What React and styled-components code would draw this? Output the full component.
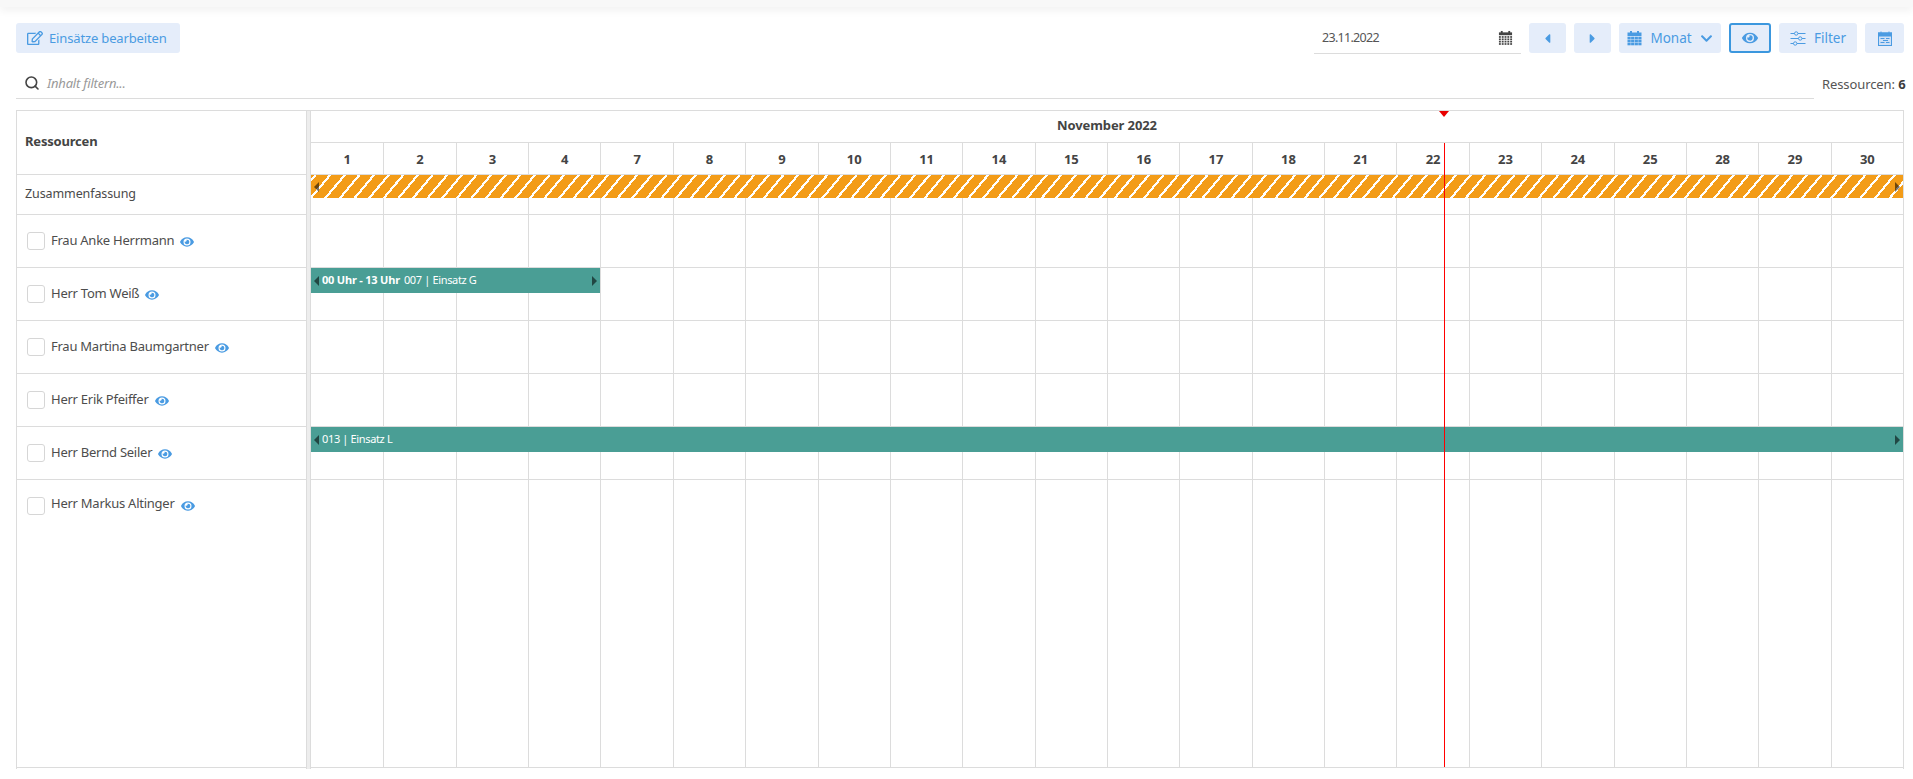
import React from "react";
import styled, { createGlobalStyle } from "styled-components";
import { FaRegEdit, FaEye, FaCaretLeft, FaCaretRight, FaChevronDown } from "react-icons/fa";
import { FiSearch } from "react-icons/fi";

const Global = createGlobalStyle`
  html, body { margin: 0; padding: 0; background: #fff; overflow: hidden; }
  * { box-sizing: border-box; }
  body { font-family: "Noto Sans", "Open Sans", sans-serif; font-size: 13px; color: #4a4a4a; }
`;

const Page = styled.div`
  height: 100vh;
  display: flex;
  flex-direction: column;
`;
const TopBar = styled.div`
  height: 7px;
  background: #f8f8f8;
  box-shadow: 0 3px 8px rgba(0, 0, 0, 0.07);
`;
const Toolbar = styled.div`
  display: flex;
  align-items: center;
  justify-content: space-between;
  margin-top: 16px;
  padding: 0 9px 0 16px;
  height: 30px;
`;
const Group = styled.div`
  display: flex;
  align-items: center;
  gap: 8px;
`;
const Button = styled.button`
  height: 30px;
  width: ${(p) => p.$w}px;
  display: flex;
  align-items: center;
  justify-content: center;
  gap: ${(p) => p.$gap ?? 8}px;
  border: ${(p) => (p.$active ? "2px solid #3b97de" : "none")};
  border-radius: 3px;
  background: #e5edfa;
  color: #4a9be2;
  font: 13.5px "Noto Sans", sans-serif;
  padding: 0;
`;
const EditButton = styled(Button)`
  font-size: 13px;
  letter-spacing: -0.15px;
  justify-content: flex-start;
  padding-left: 11px;
  gap: 6px;
`;
const DateField = styled.div`
  width: 207px;
  height: 31px;
  padding: 0 8px 0 8px;
  display: flex;
  align-items: center;
  justify-content: space-between;
  border-bottom: 1px solid #dcdcdc;
  color: #555;
  font-size: 12.5px;
  letter-spacing: -0.7px;
`;
const FilterRow = styled.div`
  display: flex;
  margin-top: 15px;
  padding: 0 9px 0 16px;
  gap: 8px;
  height: 31px;
  align-items: center;
`;
const SearchBox = styled.div`
  flex: 1;
  height: 31px;
  padding-left: 8px;
  display: flex;
  align-items: center;
  gap: 7px;
  border-bottom: 1px solid #dcdcdc;
  color: #444;
`;
const Placeholder = styled.span`
  font-style: italic;
  color: #999;
  font-size: 13px;
  letter-spacing: -0.2px;
`;
const Count = styled.div`
  width: 82px;
  padding-right: 1px;
  text-align: right;
  font-size: 13px;
  letter-spacing: -0.1px;
  white-space: nowrap;
  color: #555;
  b { color: #3c3c3c; }
`;
const Chart = styled.div`
  display: flex;
  margin: 11px 9px 0 16px;
  height: 659px;
`;
const Left = styled.div`
  width: 291px;
  border-left: 1px solid #dcdcdc;
  border-right: 1px solid #dcdcdc;
  border-top: 1px solid #dcdcdc;
`;
const Splitter = styled.div`
  width: 4px;
  background: #ededed;
  border-right: 1px solid #dcdcdc;
  border-top: 1px solid #dcdcdc;
`;
const Right = styled.div`
  flex: 1;
  position: relative;
  height: 659px;
  border-top: 1px solid #dcdcdc;
  border-right: 1px solid #dcdcdc;
`;
const HeadCell = styled.div`
  height: 64px;
  border-bottom: 1px solid #dcdcdc;
  padding: 0 0 3px 8px;
  display: flex;
  align-items: center;
  font-weight: 700;
  font-size: 13px;
  letter-spacing: -0.2px;
  color: #444;
`;
const LabelRow = styled.div`
  height: ${(p) => p.$h}px;
  border-bottom: 1px solid #dcdcdc;
  display: flex;
  align-items: ${(p) => (p.$last ? "flex-start" : "center")};
  padding: ${(p) => (p.$last ? "17px 0 0 10px" : "0 0 0 10px")};
  gap: 6px;
`;
const SummaryLabel = styled.div`
  height: 40px;
  border-bottom: 1px solid #dcdcdc;
  display: flex;
  align-items: center;
  padding: 0 0 2px 8px;
  font-size: 12.5px;
  letter-spacing: -0.1px;
  color: #4a4a4a;
`;
const Check = styled.span`
  width: 18px;
  height: 18px;
  border: 1px solid #d6d6d6;
  border-radius: 3px;
  background: #fff;
  flex: none;
`;
const Name = styled.span`
  font-size: 13px;
  letter-spacing: -0.25px;
  color: #4d4d4d;
  margin-top: -3px;
`;
const EyeWrap = styled.span`
  color: #4a9be2;
  display: flex;
  margin: 2px 0 0 0;
`;
const Month = styled.div`
  height: 32px;
  border-bottom: 1px solid #dcdcdc;
  padding-bottom: 3px;
  display: flex;
  align-items: center;
  justify-content: center;
  font-weight: 700;
  font-size: 13px;
  letter-spacing: -0.1px;
  color: #444;
`;
const Cols = styled.div`
  display: grid;
  grid-template-columns: repeat(22, 1fr);
  height: ${(p) => p.$h}px;
  border-bottom: 1px solid #dcdcdc;
  position: relative;
`;
const DayCell = styled.div`
  display: flex;
  align-items: center;
  justify-content: center;
  font-weight: 700;
  font-size: 13px;
  color: #444;
  & + & { border-left: 1px solid #dcdcdc; }
`;
const GridCell = styled.div`
  & + & { border-left: 1px solid #dcdcdc; }
`;
const Bar = styled.div`
  position: absolute;
  top: ${(p) => p.$top}px;
  left: 0;
  width: ${(p) => p.$width};
  height: ${(p) => p.$h}px;
  color: #fff;
  font-size: 11px;
  display: flex;
  padding: 4px 0 0 11px;
  gap: 4px;
  letter-spacing: -0.2px;
  span { letter-spacing: -0.35px; }
  background: ${(p) =>
    p.$striped
      ? "repeating-linear-gradient(-50deg, #f39c18 0, #f39c18 9px, #fff 9px, #fff 11.2px)"
      : "#4a9e95"};
`;
const Arrow = styled.span`
  position: absolute;
  top: ${(p) => p.$top}px;
  ${(p) => (p.$side === "left" ? "left: 3px;" : "right: 3px;")}
  width: 0;
  height: 0;
  border-top: 5px solid transparent;
  border-bottom: 5px solid transparent;
  ${(p) =>
    p.$side === "left"
      ? "border-right: 5px solid rgba(0,0,0,.55);"
      : "border-left: 5px solid rgba(0,0,0,.55);"}
`;
const TodayLine = styled.div`
  position: absolute;
  top: 32px;
  bottom: 2px;
  left: 1133px;
  width: 1px;
  background: #f00;
`;
const TodayMark = styled.div`
  position: absolute;
  top: 0;
  left: 1128px;
  width: 0;
  height: 0;
  border-left: 5px solid transparent;
  border-right: 5px solid transparent;
  border-top: 6px solid #e80000;
`;

const DateCalendar = () => (
  <svg width="15" height="16" viewBox="0 0 16 16" fill="#444">
    <rect x="3" y="0.5" width="2" height="3" />
    <rect x="11" y="0.5" width="2" height="3" />
    <rect x="1" y="2" width="14" height="3" />
    {[6, 8.5, 11, 13.5].map((y) =>
      [1, 4, 7, 10, 13].map((x) => <rect key={`${x}-${y}`} x={x} y={y} width="2" height="1.8" />)
    )}
  </svg>
);
const MonthCalendar = () => (
  <svg width="15" height="15" viewBox="0 0 15 15" fill="#4a9be2">
    <rect x="3" y="0" width="2" height="3" />
    <rect x="10" y="0" width="2" height="3" />
    <rect x="0.5" y="1.5" width="14" height="3.5" />
    {[5.7, 8.7, 11.7].map((y) =>
      [0.5, 4.1, 7.7, 11.3].map((x) => (
        <rect key={`${x}-${y}`} x={x} y={y} width="3.2" height="2.6" />
      ))
    )}
  </svg>
);
const Sliders = () => (
  <svg width="16" height="15" viewBox="0 0 16 15" fill="none" stroke="#4a9be2" strokeWidth="1">
    <path d="M0.5 2.5h4M8 2.5h7.5M0.5 7.5h8M12 7.5h3.5M0.5 12.5h3M7 12.5h8.5" />
    <circle cx="6.2" cy="2.5" r="1.7" />
    <circle cx="10.2" cy="7.5" r="1.7" />
    <circle cx="5.2" cy="12.5" r="1.7" />
  </svg>
);
const PlanIcon = () => (
  <svg width="14" height="15" viewBox="0 0 14 15" fill="none" stroke="#4a9be2">
    <rect x="0.5" y="2" width="13" height="12.5" fill="#cfe0f6" />
    <rect x="0.5" y="2" width="13" height="3" fill="#4a9be2" />
    <path d="M3 0.5v2.5M11 0.5v2.5M2.5 7.5h4M8 7.5h3.5M5 9.5h5M2.5 11.5h4M8 11.5h3.5" />
  </svg>
);

const days = [1, 2, 3, 4, 7, 8, 9, 10, 11, 14, 15, 16, 17, 18, 21, 22, 23, 24, 25, 28, 29, 30];
const people = [
  "Frau Anke Herrmann",
  "Herr Tom Weiß",
  "Frau Martina Baumgartner",
  "Herr Erik Pfeiffer",
  "Herr Bernd Seiler",
  "Herr Markus Altinger",
];
const rowBars = {
  1: { width: "289px", content: (<><b>00 Uhr - 13 Uhr</b><span>007 | Einsatz G</span></>) },
  4: { width: "100%", content: <span>013 | Einsatz L</span> },
};

const Cells = () => days.map((d) => <GridCell key={d} />);

export default function App() {
  return (
    <Page>
      <Global />
      <TopBar />
      <Toolbar>
        <EditButton $w={164}><FaRegEdit size={16} />Einsätze bearbeiten</EditButton>
        <Group>
          <DateField>
            <span>23.11.2022</span>
            <DateCalendar />
          </DateField>
          <Button $w={37}><FaCaretLeft size={15} /></Button>
          <Button $w={37}><FaCaretRight size={15} /></Button>
          <Button $w={102}><MonthCalendar />Monat<FaChevronDown size={13} /></Button>
          <Button $w={42} $active><FaEye size={16} /></Button>
          <Button $w={78}><Sliders />Filter</Button>
          <Button $w={39}><PlanIcon /></Button>
        </Group>
      </Toolbar>
      <FilterRow>
        <SearchBox>
          <FiSearch size={16} strokeWidth={2.4} />
          <Placeholder>Inhalt filtern...</Placeholder>
        </SearchBox>
        <Count>Ressourcen: <b>6</b></Count>
      </FilterRow>
      <Chart>
        <Left>
          <HeadCell>Ressourcen</HeadCell>
          <SummaryLabel>Zusammenfassung</SummaryLabel>
          {people.map((n, i) => (
            <LabelRow key={n} $h={i === 5 ? 288 : 53} $last={i === 5}>
              <Check />
              <Name>{n}</Name>
              <EyeWrap><FaEye size={14} /></EyeWrap>
            </LabelRow>
          ))}
        </Left>
        <Splitter />
        <Right>
          <Month>November 2022</Month>
          <Cols $h={32}>
            {days.map((d) => <DayCell key={d}>{d}</DayCell>)}
          </Cols>
          <Cols $h={40}>
            <Cells />
            <Bar $striped $top={0} $h={23} $width="100%">
              <Arrow $side="left" $top={7} />
              <Arrow $side="right" $top={7} />
            </Bar>
          </Cols>
          {people.map((n, i) => {
            const b = rowBars[i];
            return (
              <Cols key={n} $h={i === 5 ? 288 : 53}>
                <Cells />
                {b && (
                  <Bar $top={0} $h={25} $width={b.width}>
                    <Arrow $side="left" $top={8} />
                    {b.content}
                    <Arrow $side="right" $top={8} />
                  </Bar>
                )}
              </Cols>
            );
          })}
          <TodayMark />
          <TodayLine />
        </Right>
      </Chart>
    </Page>
  );
}
